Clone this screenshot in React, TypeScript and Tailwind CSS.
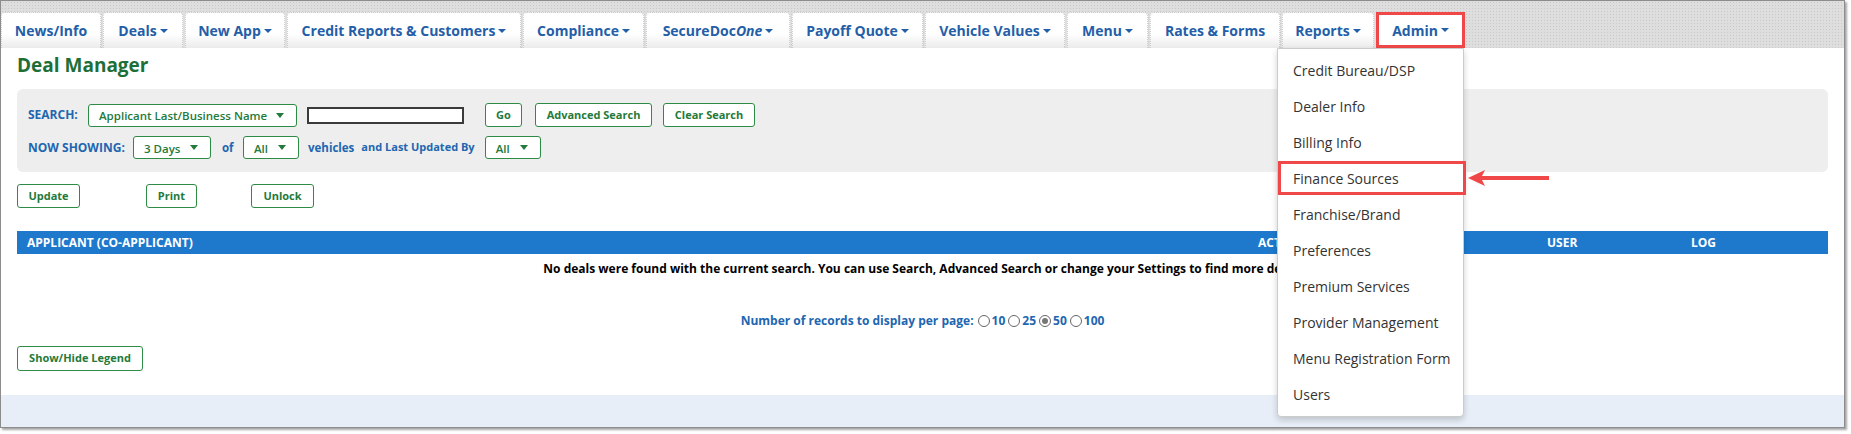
import type { ReactNode } from 'react'

const tabs: { label: ReactNode; w: string; caret: boolean }[] = [
  { label: 'News/Info', w: 'w-[100px]', caret: false },
  { label: 'Deals', w: 'w-[80px]', caret: true },
  { label: 'New App', w: 'w-[100px]', caret: true },
  { label: 'Credit Reports & Customers', w: 'w-[234px]', caret: true },
  { label: 'Compliance', w: 'w-[121px]', caret: true },
  {
    label: (
      <>
        SecureDoc<i>One</i>
      </>
    ),
    w: 'w-[144px]',
    caret: true,
  },
  { label: 'Payoff Quote', w: 'w-[131px]', caret: true },
  { label: 'Vehicle Values', w: 'w-[140px]', caret: true },
  { label: 'Menu', w: 'w-[81px]', caret: true },
  { label: 'Rates & Forms', w: 'w-[130px]', caret: false },
  { label: 'Reports', w: 'w-[92px]', caret: true },
]

const adminItems = [
  'Credit Bureau/DSP',
  'Dealer Info',
  'Billing Info',
  'Finance Sources',
  'Franchise/Brand',
  'Preferences',
  'Premium Services',
  'Provider Management',
  'Menu Registration Form',
  'Users',
]

const Caret = () => (
  <span className="inline-block border-x-[4px] border-t-[4px] border-x-transparent border-t-[#245ea8]" />
)

const GreenBtn = ({ children, className = '' }: { children: ReactNode; className?: string }) => (
  <button
    className={`flex h-[24px] items-center justify-center rounded-[3px] border border-[#2e8b46] bg-white text-[11px] font-bold whitespace-nowrap text-[#247a3a] ${className}`}
  >
    {children}
  </button>
)

const Select = ({ children, className = '' }: { children: ReactNode; className?: string }) => (
  <div
    className={`flex h-[23px] items-center justify-between rounded-[3px] border border-[#2e8b46] bg-white pl-[10px] pr-[12px] text-[11.5px] font-semibold whitespace-nowrap text-[#247a3a] ${className}`}
  >
    <span className="mt-[2px]">{children}</span>
    <span className="inline-block shrink-0 border-x-[4px] border-t-[5px] border-x-transparent border-t-[#247a3a]" />
  </div>
)

const Radio = ({ checked = false }: { checked?: boolean }) => (
  <span className="mr-[2px] ml-[3px] inline-flex h-[12px] w-[12px] items-center justify-center rounded-full border border-[#666] bg-white">
    {checked && <span className="h-[6px] w-[6px] rounded-full bg-[#777]" />}
  </span>
)

export default function App() {
  return (
    <div className="h-[434px] w-[1851px] bg-white font-['Open_Sans',sans-serif]">
      <div className="relative flex h-[428px] w-[1845px] flex-col border border-[#8c8c8c] shadow-[2px_2px_2px_rgba(0,0,0,0.35)]">
        {/* top nav */}
        <div className="flex h-[47px] shrink-0 items-end gap-[2px] bg-[#dedede] bg-[radial-gradient(#c9c9c9_1px,transparent_1px)] bg-[length:3px_3px]">
          {tabs.map((t, i) => (
            <div
              key={i}
              className={`flex h-[36px] items-center justify-center gap-[3px] rounded-t-[4px] border-x border-t border-dotted border-[#cfcfcf] bg-linear-to-b from-white from-60% to-[#ebebeb] text-[14px] font-bold text-[#245ea8] ${t.w}`}
            >
              <span>{t.label}</span>
              {t.caret && <Caret />}
            </div>
          ))}
          <div className="flex h-[36px] w-[89px] items-center justify-center gap-[3px] border-[3px] border-[#f04848] bg-white text-[14px] font-bold text-[#245ea8]">
            <span>Admin</span>
            <Caret />
          </div>
        </div>

        {/* main */}
        <div className="flex flex-1 flex-col bg-white px-[16px]">
          <h1 className="mt-[4px] text-[19px] leading-[27px] font-bold text-[#1e6e37]">Deal Manager</h1>

          <div className="mt-[10px] rounded-[6px] bg-[#eeeeee] px-[11px] pt-[14px] pb-[13px] text-[12px] font-bold text-[#2166b0]">
            <div className="flex h-[24px] items-center">
              <span className="w-[60px]">SEARCH:</span>
              <Select className="w-[209px]">Applicant Last/Business Name</Select>
              <div className="ml-[10px] h-[17px] w-[157px] border-2 border-[#3a3a3a] bg-white" />
              <GreenBtn className="ml-[21px] w-[37px]">Go</GreenBtn>
              <GreenBtn className="ml-[13px] w-[117px]">Advanced Search</GreenBtn>
              <GreenBtn className="ml-[11px] w-[92px]">Clear Search</GreenBtn>
            </div>
            <div className="mt-[9px] flex h-[23px] items-center">
              <span className="w-[105px]">NOW SHOWING:</span>
              <Select className="w-[78px]">3 Days</Select>
              <span className="ml-[11px] w-[21px] text-[11.5px]">of</span>
              <Select className="w-[56px]">All</Select>
              <span className="ml-[9px] text-[11.5px]">vehicles</span>
              <span className="ml-[7px] text-[11px]">and Last Updated By</span>
              <Select className="ml-[10px] w-[56px]">All</Select>
            </div>
          </div>

          <div className="mt-[12px] flex">
            <GreenBtn className="w-[63px]">Update</GreenBtn>
            <GreenBtn className="ml-[66px] w-[51px]">Print</GreenBtn>
            <GreenBtn className="ml-[54px] w-[63px]">Unlock</GreenBtn>
          </div>

          <div className="mt-[23px] flex h-[23px] items-center bg-[#1e79cd] pl-[10px] text-[12px] font-bold text-white">
            <span className="flex-1">APPLICANT (CO-APPLICANT)</span>
            <span className="w-[289px]">ACTIONS</span>
            <span className="w-[144px]">USER</span>
            <span className="w-[137px]">LOG</span>
          </div>

          <p className="mt-[6px] text-center text-[12px] leading-[18px] font-bold text-black">
            No deals were found with the current search. You can use Search, Advanced Search or change your Settings to find more deals.
          </p>

          <div className="mt-[34px] flex h-[18px] items-center justify-center text-[12px] font-bold text-[#2166b0]">
            <span className="mr-[1px]">Number of records to display per page:</span>
            <Radio />
            <span>10</span>
            <Radio />
            <span>25</span>
            <Radio checked />
            <span>50</span>
            <Radio />
            <span>100</span>
          </div>

          <div className="mt-[16px] flex">
            <GreenBtn className="h-[25px] w-[126px]">Show/Hide Legend</GreenBtn>
          </div>
        </div>

        <div className="h-[32px] shrink-0 bg-[#e7eef7]" />

        {/* admin dropdown */}
        <div className="absolute top-[47px] left-[1276px] h-[369px] w-[187px] rounded-b-[4px] border border-[#cccccc] bg-white pt-[3px] shadow-[0_3px_6px_rgba(0,0,0,0.18)]">
          {adminItems.map((item) => (
            <div key={item} className="flex h-[36px] items-center pl-[15px] text-[14px] text-[#333333]">
              {item}
            </div>
          ))}
        </div>

        {/* highlight + arrow */}
        <div className="absolute top-[160px] left-[1277px] h-[34px] w-[188px] border-[3px] border-[#f04848]" />
        <svg className="absolute top-[168px] left-[1466px]" width="84" height="18" viewBox="0 0 84 18">
          <polygon points="1,9 18,1 15,7 82,7 82,11 15,11 18,17" fill="#f04848" />
        </svg>
      </div>
    </div>
  )
}
